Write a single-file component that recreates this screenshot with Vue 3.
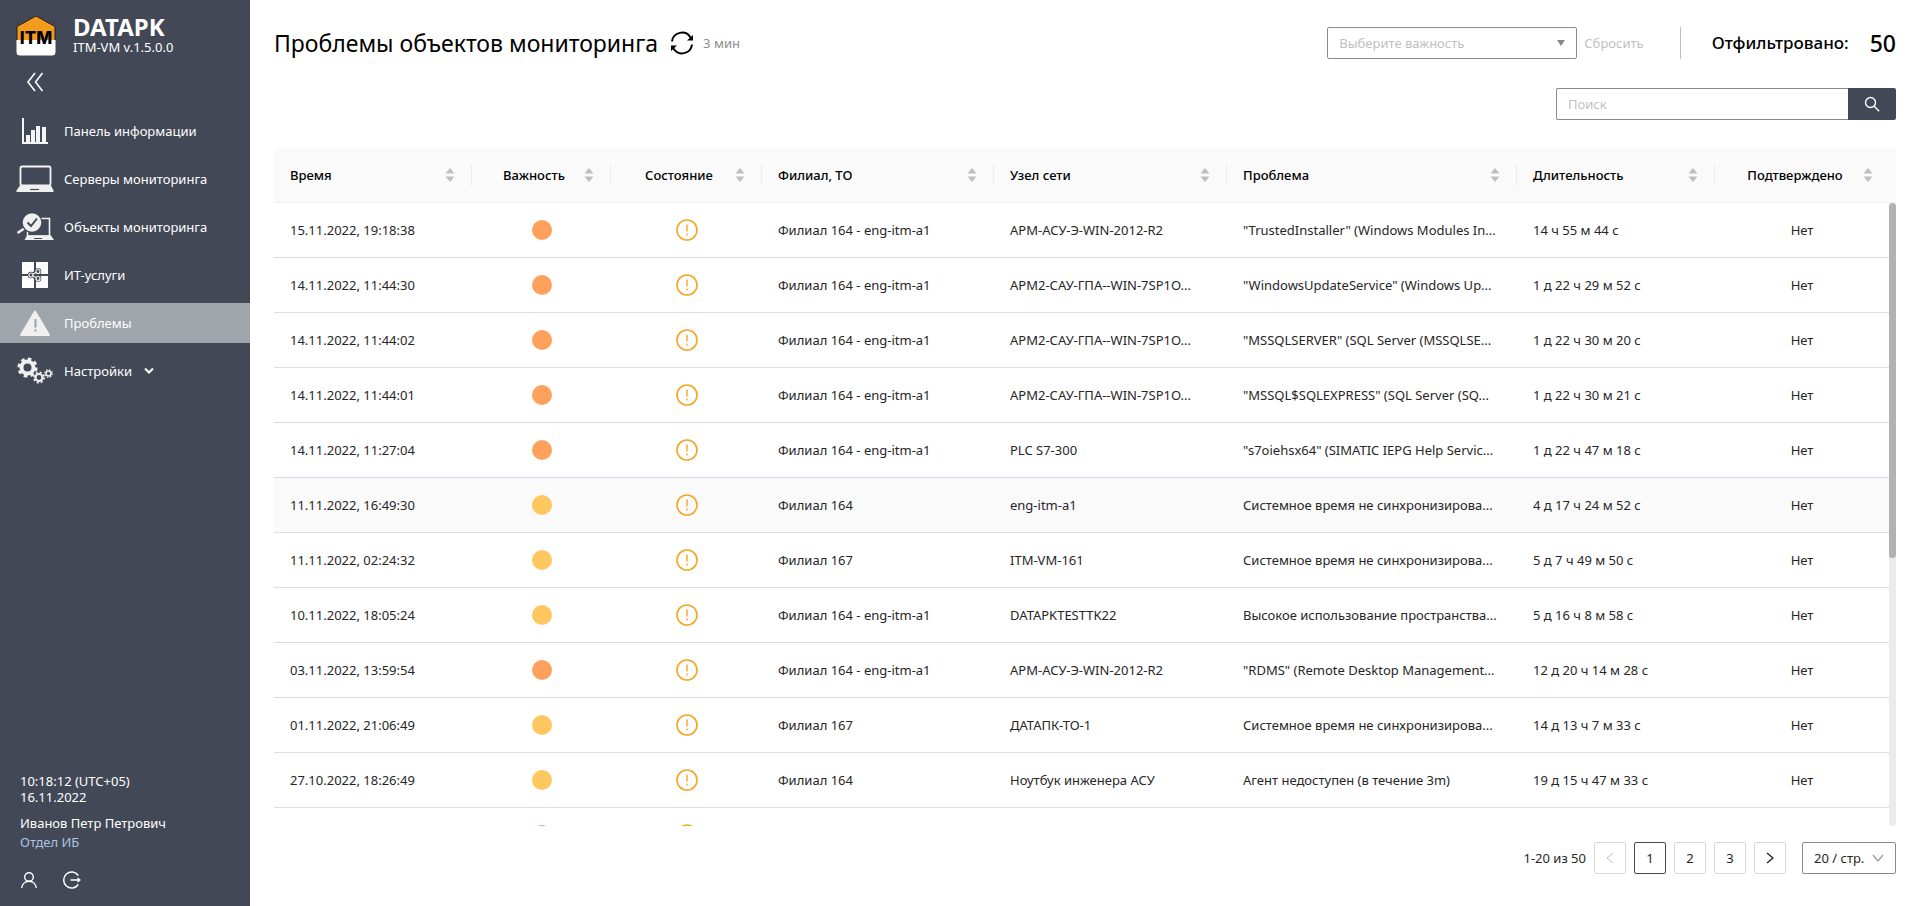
<script setup>
import { ref } from 'vue'

const menu = [
  { label: 'Панель информации', icon: 'chart' },
  { label: 'Серверы мониторинга', icon: 'laptop' },
  { label: 'Объекты мониторинга', icon: 'search' },
  { label: 'ИТ-услуги', icon: 'services' },
  { label: 'Проблемы', icon: 'warning', active: true },
  { label: 'Настройки', icon: 'gears', sub: true },
]

const columns = [
  { key: 'time', label: 'Время', width: 198 },
  { key: 'level', label: 'Важность', width: 139, center: true },
  { key: 'state', label: 'Состояние', width: 151, center: true },
  { key: 'branch', label: 'Филиал, ТО', width: 232 },
  { key: 'node', label: 'Узел сети', width: 233 },
  { key: 'problem', label: 'Проблема', width: 290 },
  { key: 'duration', label: 'Длительность', width: 198 },
  { key: 'ack', label: 'Подтверждено', width: 174, center: true },
]

const source = [
  ['15.11.2022, 19:18:38', 'high', 'Филиал 164 - eng-itm-a1', 'АРМ-АСУ-Э-WIN-2012-R2', '"TrustedInstaller" (Windows Modules In...', '14 ч 55 м 44 с'],
  ['14.11.2022, 11:44:30', 'high', 'Филиал 164 - eng-itm-a1', 'АРМ2-САУ-ГПА--WIN-7SP1O...', '"WindowsUpdateService" (Windows Up...', '1 д 22 ч 29 м 52 с'],
  ['14.11.2022, 11:44:02', 'high', 'Филиал 164 - eng-itm-a1', 'АРМ2-САУ-ГПА--WIN-7SP1O...', '"MSSQLSERVER" (SQL Server (MSSQLSE...', '1 д 22 ч 30 м 20 с'],
  ['14.11.2022, 11:44:01', 'high', 'Филиал 164 - eng-itm-a1', 'АРМ2-САУ-ГПА--WIN-7SP1O...', '"MSSQL$SQLEXPRESS" (SQL Server (SQ...', '1 д 22 ч 30 м 21 с'],
  ['14.11.2022, 11:27:04', 'high', 'Филиал 164 - eng-itm-a1', 'PLC S7-300', '"s7oiehsx64" (SIMATIC IEPG Help Servic...', '1 д 22 ч 47 м 18 с'],
  ['11.11.2022, 16:49:30', 'mid', 'Филиал 164', 'eng-itm-a1', 'Системное время не синхронизирова...', '4 д 17 ч 24 м 52 с'],
  ['11.11.2022, 02:24:32', 'mid', 'Филиал 167', 'ITM-VM-161', 'Системное время не синхронизирова...', '5 д 7 ч 49 м 50 с'],
  ['10.11.2022, 18:05:24', 'mid', 'Филиал 164 - eng-itm-a1', 'DATAPKTESTTK22', 'Высокое использование пространства...', '5 д 16 ч 8 м 58 с'],
  ['03.11.2022, 13:59:54', 'high', 'Филиал 164 - eng-itm-a1', 'АРМ-АСУ-Э-WIN-2012-R2', '"RDMS" (Remote Desktop Management...', '12 д 20 ч 14 м 28 с'],
  ['01.11.2022, 21:06:49', 'mid', 'Филиал 167', 'ДАТАПК-ТО-1', 'Системное время не синхронизирова...', '14 д 13 ч 7 м 33 с'],
  ['27.10.2022, 18:26:49', 'mid', 'Филиал 164', 'Ноутбук инженера АСУ', 'Агент недоступен (в течение 3m)', '19 д 15 ч 47 м 33 с'],
  ['', 'high', '', '', '', ''],
]
const rows = source.map(([time, level, branch, node, problem, duration]) => ({
  time, level, branch, node, problem, duration, ack: time ? 'Нет' : '',
}))

const query = ref('')
const page = ref(1)
const hovered = 5
</script>

<template>
  <div class="layout">
    <aside class="sidebar">
      <header class="brand">
        <svg class="logo" viewBox="0 0 40 41" aria-hidden="true">
          <path d="M20 1 39 11.500V26H1V11.500Z" fill="#f39c1c" stroke="#2b1a1a" />
          <path d="M.5 25h39v12a3.500 3.500 0 0 1-3.500 3.500H4A3.500 3.500 0 0 1 .5 37Z" fill="#fff" />
          <text x="20" y="29" text-anchor="middle" class="logo-text">ITM</text>
        </svg>
        <div>
          <div class="brand-name">DATAPK</div>
          <div class="brand-version">ITM-VM v.1.5.0.0</div>
        </div>
      </header>
      <button class="collapse" type="button" aria-label="Свернуть меню">
        <svg width="18" height="20" viewBox="0 0 18 20"><path d="M9 1 2 10l7 9M16.500 1l-7 9 7 9" fill="none" stroke="#fff" stroke-width="1.600" /></svg>
      </button>
      <nav class="menu">
        <a v-for="m in menu" :key="m.label" href="#" class="menu-item" :class="{ active: m.active }">
          <svg class="menu-icon" viewBox="0 0 40 32" aria-hidden="true">
            <g v-if="m.icon === 'chart'" fill="#f5f5f5">
              <path d="M8 3h2v24h24v2H8Z" />
              <path d="M12 20h4v7h-4zM17 15h4v12h-4zM22 11h4v16h-4zM28 12h4v15h-4z" />
            </g>
            <g v-else-if="m.icon === 'laptop'">
              <rect x="6.500" y="3.500" width="30" height="19" rx="1.500" fill="none" stroke="#f5f5f5" stroke-width="1.800" />
              <path d="M6 22.500h31l2.500 5V29h-37v-1.500Z" fill="#f0f0f0" />
              <path d="M16 26.500h9" stroke="#424855" stroke-width="1.200" />
            </g>
            <g v-else-if="m.icon === 'search'">
              <path d="M22 7.500h13.500V25H13.500V18" fill="none" stroke="#f0f0f0" stroke-width="1.600" />
              <path d="M13 24.500h24l3 4.500H10.500Z" fill="#f0f0f0" />
              <path d="M20 27.500h8" stroke="#424855" />
              <path d="M11 17 3.500 22" stroke="#f0f0f0" stroke-width="2.400" />
              <circle cx="18" cy="11.500" r="10.500" fill="#424855" />
              <circle cx="18" cy="11.500" r="9.300" fill="#f0f0f0" />
              <path d="m13.500 11.500 3.500 3.500 6-7.500" fill="none" stroke="#424855" stroke-width="2" />
            </g>
            <g v-else-if="m.icon === 'services'">
              <path d="M8 3h12v12H8zM22 3h12v12H22zM8 17h12v12H8zM22 17h12v12H22z" fill="#fff" />
              <path d="M17 16l7-4M17 16l7 4" stroke="#424855" stroke-width="3.500" />
              <g fill="#424855"><circle cx="17" cy="16" r="3.300" /><circle cx="24" cy="12.500" r="3.300" /><circle cx="24" cy="19.500" r="3.300" /></g>
              <path d="M17 16l7-3.500M17 16l7 3.500" stroke="#eee" stroke-width="1.200" />
              <g fill="#424855" stroke="#eee" stroke-width="1.200"><circle cx="17" cy="16" r="2" /><circle cx="24" cy="12.500" r="2" /><circle cx="24" cy="19.500" r="2" /></g>
            </g>
            <g v-else-if="m.icon === 'warning'">
              <path d="M21 4.500 35 28H7Z" fill="#f0f0f0" stroke="#f0f0f0" stroke-width="2" stroke-linejoin="round" />
              <path d="M21.500 12v8.500M21.500 22.500v2" stroke="#9aa0a8" stroke-width="2" />
            </g>
            <g v-else fill="none" stroke="#f0f0f0">
              <circle cx="13.500" cy="12.500" r="6" stroke-width="4" />
              <circle cx="13.500" cy="12.500" r="8.800" stroke-width="2.600" stroke-dasharray="3.700 3.212" />
              <circle cx="25" cy="22.500" r="3.500" stroke-width="2.200" />
              <circle cx="25" cy="22.500" r="5.200" stroke-width="1.600" stroke-dasharray="2.100 1.984" />
              <circle cx="34.500" cy="18.500" r="2.500" stroke-width="1.600" />
              <circle cx="34.500" cy="18.500" r="3.800" stroke-width="1.200" stroke-dasharray="1.500 1.485" />
            </g>
          </svg>
          <span>{{ m.label }}</span>
          <svg v-if="m.sub" class="chevron" width="10" height="8" viewBox="0 0 10 8"><path d="m1 1.500 4 4 4-4" fill="none" stroke="#fff" stroke-width="2" /></svg>
        </a>
      </nav>
      <footer class="account">
        <time class="clock">10:18:12 (UTC+05)<br />16.11.2022</time>
        <div class="user-name">Иванов Петр Петрович</div>
        <div class="user-unit">Отдел ИБ</div>
        <div class="account-actions">
          <button type="button" aria-label="Профиль">
            <svg width="18" height="18" viewBox="0 0 18 18" fill="none" stroke="#fff" stroke-width="1.400"><circle cx="9" cy="6" r="4.300" /><path d="M1.700 17c.4-4 3.300-6.700 7.300-6.700s6.900 2.700 7.300 6.700" /></svg>
          </button>
          <button type="button" aria-label="Выйти">
            <svg width="20" height="18" viewBox="0 0 20 18" fill="none" stroke="#fff" stroke-width="1.500"><path d="M16.300 4.500a8 8 0 1 0 0 9M8.500 9H17" /><path d="M15.500 6.200 19 9l-3.500 2.800Z" fill="#fff" stroke="none" /></svg>
          </button>
        </div>
      </footer>
    </aside>

    <main class="content">
      <div class="top">
        <h1>Проблемы объектов мониторинга</h1>
        <button class="refresh" type="button" aria-label="Обновить">
          <svg width="24" height="24" viewBox="0 0 24 24"><path d="M2 10.500A10 10 0 0 1 20.500 6.500M22 13.500A10 10 0 0 1 3.500 17.500" fill="none" stroke="#000" stroke-width="2" /><path d="M23 4v5.500h-6ZM1 20v-5.500h6Z" /></svg>
        </button>
        <span class="interval">3 мин</span>
        <div class="filters">
          <div class="select-box level-box">
            <select class="level" aria-label="Важность"><option>Выберите важность</option></select>
            <svg class="caret" width="8" height="6" viewBox="0 0 8 6"><path d="M0 0h8L4 6Z" fill="#888" /></svg>
          </div>
          <button class="reset" type="button">Сбросить</button>
          <div class="filtered"><span>Отфильтровано:</span><strong>50</strong></div>
        </div>
      </div>

      <form class="search" @submit.prevent>
        <input v-model="query" type="text" placeholder="Поиск" aria-label="Поиск" />
        <button type="submit" aria-label="Найти">
          <svg width="16" height="16" viewBox="0 0 16 16" fill="none" stroke="#fff" stroke-width="1.400"><circle cx="6.500" cy="6.500" r="5" /><path d="m10.200 10.200 5 5" /></svg>
        </button>
      </form>

      <section class="grid">
        <div class="grid-head">
          <table>
            <colgroup><col v-for="c in columns" :key="c.key" :style="{ width: c.width + 'px' }" /></colgroup>
            <thead>
              <tr>
                <th v-for="c in columns" :key="c.key" scope="col">
                  <div class="th" :class="{ center: c.center }">
                    <span>{{ c.label }}</span>
                    <button type="button" :aria-label="'Сортировать: ' + c.label">
                      <svg width="10" height="14" viewBox="0 0 10 14" fill="#bfbfbf"><path d="M5 0 9.500 5.500H.5ZM.5 8.500h9L5 14Z" /></svg>
                    </button>
                  </div>
                </th>
              </tr>
            </thead>
          </table>
        </div>
        <div class="grid-body">
          <div class="viewport">
            <table>
              <colgroup><col v-for="c in columns" :key="c.key" :style="{ width: c.width + 'px' }" /></colgroup>
              <tbody>
                <tr v-for="(r, i) in rows" :key="i" :class="{ hovered: i === hovered }">
                  <td v-for="c in columns" :key="c.key" :class="{ center: c.center }">
                    <span v-if="c.key === 'level'" class="dot" :class="r.level"></span>
                    <svg v-else-if="c.key === 'state'" class="state" viewBox="0 0 22 22"><circle cx="11" cy="11" r="10" fill="none" stroke="#f5a623" stroke-width="1.600" /><path d="M11 5.500v7M11 14.500v2" stroke="#f5a623" stroke-width="1.400" /></svg>
                    <template v-else>{{ r[c.key] }}</template>
                  </td>
                </tr>
              </tbody>
            </table>
          </div>
          <div class="track"><div class="thumb"></div></div>
        </div>
      </section>

      <nav class="pagination" aria-label="Страницы">
        <span class="total">1-20 из 50</span>
        <button type="button" disabled aria-label="Назад"><svg width="8" height="12" viewBox="0 0 8 12"><path d="M7 1 1 6l6 5" fill="none" stroke="#bfbfbf" /></svg></button>
        <button v-for="n in 3" :key="n" type="button" :class="{ current: n === page }" @click="page = n">{{ n }}</button>
        <button type="button" aria-label="Вперёд"><svg width="8" height="12" viewBox="0 0 8 12"><path d="m1 1 6 5-6 5" fill="none" stroke="#222" stroke-width="1.400" /></svg></button>
        <div class="select-box size-box">
          <select aria-label="Записей на странице"><option>20 / стр.</option></select>
          <svg class="caret" width="12" height="8" viewBox="0 0 12 8"><path d="m1 1 5 6 5-6" fill="none" stroke="#999" stroke-width="1.200" /></svg>
        </div>
      </nav>
    </main>
  </div>
</template>

<style>
body { margin: 0; }
</style>

<style scoped>
.layout { display: flex; height: 100vh; font: 13px/22px "Noto Sans", "Open Sans", sans-serif; color: #262626; background: #fff; }
button, input, select { font: inherit; color: inherit; margin: 0; }
button { padding: 0; border: 0; background: none; cursor: pointer; }
svg { display: block; }
.sidebar { width: 250px; flex: none; display: flex; flex-direction: column; background: #424855; color: #fff; }
.brand { display: flex; gap: 17px; padding: 15px 16px 0; }
.logo { width: 40px; height: 41px; }
.logo-text { font: 800 17px Inter, sans-serif; fill: #000; }
.brand-name { font-size: 24px; font-weight: 700; line-height: 24px; }
.brand-version { line-height: 17px; }
.collapse { align-self: flex-start; margin: 16px 0 19px 26px; }
.menu { display: flex; flex-direction: column; gap: 8px; }
.menu-item { display: flex; align-items: center; height: 40px; padding-left: 14px; color: #fff; text-decoration: none; }
.menu-item.active { background: #a0a4ab; }
.menu-icon { width: 40px; height: 32px; margin-right: 10px; }
.chevron { margin-left: 12px; }
.account { margin-top: auto; padding: 0 20px 17px; }
.clock { display: block; line-height: 16px; }
.user-name { margin-top: 8px; line-height: 20px; }
.user-unit { line-height: 18px; color: #a9c4e6; }
.account-actions { display: flex; gap: 24px; margin-top: 20px; }

.content { flex: 1; min-width: 0; display: flex; flex-direction: column; padding: 27px 15px 32px 24px; }
.top { display: flex; align-items: center; height: 32px; color: #000; }
h1 { margin: 0; font-size: 23px; font-weight: 400; }
.refresh { margin: 0 9px 0 12px; }
.interval { color: #8c8c8c; }
.filters { display: flex; align-items: center; margin-left: auto; }
.select-box { display: grid; align-items: center; border: 1px solid #8a8a8a; border-radius: 2px; height: 30px; }
.select-box > * { grid-area: 1 / 1; }
.select-box select { appearance: none; width: 100%; height: 30px; border: 0; background: none; outline: none; padding: 0 28px 0 11px; }
.caret { justify-self: end; margin-right: 11px; pointer-events: none; }
.level-box { width: 248px; }
.level-box select, .reset { color: #bfbfbf; }
.reset { margin-left: 7px; }
.filtered { display: flex; align-items: center; height: 32px; margin-left: 36px; padding-left: 31px; border-left: 1px solid #bfbfbf; font-size: 17px; font-weight: 500; }
.filtered strong { margin-left: 21px; font-size: 23px; font-weight: 500; }
.search { display: flex; align-self: flex-end; width: 340px; height: 32px; margin: 29px 0 28px; }
.search input { flex: 1; min-width: 0; box-sizing: border-box; border: 1px solid #8a8a8a; border-right: 0; border-radius: 2px 0 0 2px; padding: 0 11px; outline: none; }
.search input::placeholder { color: #bfbfbf; opacity: 1; }
.search button { width: 48px; display: grid; place-items: center; background: #424855; border-radius: 0 2px 2px 0; }

.grid { flex: 1; min-height: 0; display: flex; flex-direction: column; }
table { width: 100%; table-layout: fixed; border-collapse: separate; border-spacing: 0; }
.grid-head { padding-right: 7px; background: #fafafa; border-bottom: 1px solid #f0f0f0; border-radius: 2px 2px 0 0; }
th { height: 54px; padding: 0; font-weight: 500; text-align: left; color: #000; }
.th { display: flex; align-items: center; height: 22px; padding: 0 16px; border-right: 1px solid #ececec; }
th:last-child .th { border-right: 0; }
.th span { flex: 1; }
.th.center span { text-align: center; }
.th button { margin-left: 4px; }
.grid-body { flex: 1; min-height: 0; display: flex; }
.viewport { flex: 1; min-width: 0; overflow: hidden; }
td { box-sizing: border-box; height: 55px; padding: 0 16px; border-bottom: 1px solid #d9dbe9; white-space: nowrap; overflow: hidden; text-overflow: ellipsis; }
td.center { text-align: center; }
.hovered td { background: #fafafa; }
.dot { display: block; width: 20px; height: 20px; margin: 0 auto; border-radius: 50%; }
.dot.high { background: #ffa15c; }
.dot.mid { background: #ffc75f; }
.state { width: 22px; height: 22px; margin: 0 auto; }
.track { width: 7px; background: #ebebeb; border-radius: 4px; }
.thumb { height: 57%; background: #b2b2b2; border-radius: 4px; }

.pagination { display: flex; align-items: center; gap: 8px; margin-top: 16px; justify-content: flex-end; }
.pagination button { box-sizing: border-box; width: 32px; height: 32px; display: grid; place-items: center; border: 1px solid #d9d9d9; border-radius: 2px; }
.pagination .current { border-color: #424855; }
.size-box { width: 92px; margin-left: 8px; }
.size-box select { padding-right: 24px; }
</style>
